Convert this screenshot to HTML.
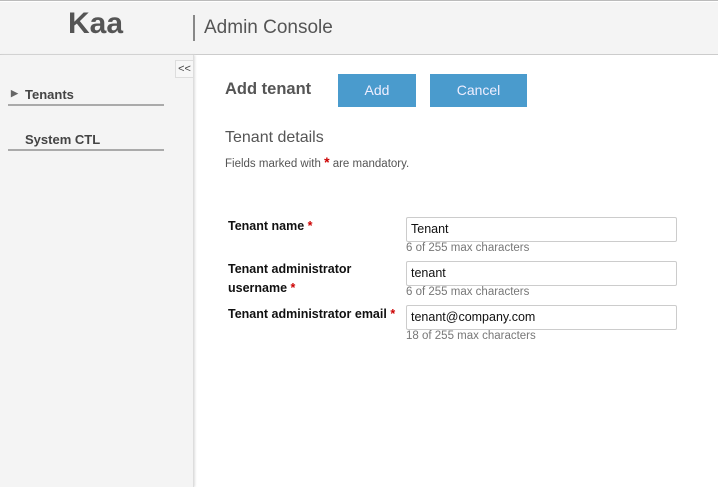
<!DOCTYPE html>
<html><head><meta charset="utf-8"><style>
*{margin:0;padding:0;box-sizing:border-box}
body{width:718px;height:486px;overflow:hidden;font-family:"Liberation Sans",sans-serif;background:#fff;position:relative;border-top:1px solid #bbb}
.hdr{position:absolute;left:0;top:1px;width:718px;height:53px;background:#f4f4f4;border-bottom:1px solid #ccc}
.logo{position:absolute;left:68px;top:5px;font-size:30px;font-weight:bold;color:#555}
.sep{position:absolute;left:193px;top:13px;width:2px;height:26px;background:#888}
.ac{position:absolute;left:204px;top:15px;font-size:19px;color:#555}
.side{position:absolute;left:0;top:54px;width:194px;height:432px;background:#f4f4f4;border-right:1px solid #ddd;box-shadow:1px 0 2px #ddd}
.tog{position:absolute;left:175px;top:59px;width:19px;height:18px;border:1px solid #ddd;background:#f7f7f7;font-size:11px;color:#444;text-align:center;line-height:16px}
.nav{position:absolute;left:8px;width:156px;border-bottom:2px solid #aaa;font-size:13px;font-weight:bold;color:#444;padding-bottom:2px;padding-left:17px}
h1{position:absolute;left:225px;top:79px;font-size:16.5px;color:#555}
.btn{position:absolute;top:73px;height:33px;background:#4a9bcd;color:#eef;font-size:14px;text-align:center;line-height:33px}
h2{position:absolute;left:225px;top:128px;font-size:16px;font-weight:normal;color:#555}
.note{position:absolute;left:225px;top:153px;font-size:11.5px;color:#555}
.r{color:#c00;font-weight:bold}
.lbl{position:absolute;left:228px;font-size:12.5px;font-weight:bold;color:#111;line-height:19px}
.in{position:absolute;left:406px;width:271px;height:25px;border:1px solid #ccc;border-radius:2px;font-size:12.5px;color:#111;padding:4px 4px}
.hint{position:absolute;left:406px;font-size:11.5px;color:#777}
</style></head><body>
<div class="hdr"><div class="logo">Kaa</div><div class="sep"></div><div class="ac">Admin Console</div></div>
<div class="side"></div>
<div class="tog">&lt;&lt;</div>
<div class="nav" style="top:86px;position:absolute"><span style="position:absolute;left:3px;top:1px;font-size:9px;color:#666">▶</span>Tenants</div>
<div class="nav" style="top:131px">System CTL</div>
<h1>Add tenant</h1>
<div class="btn" style="left:338px;width:78px">Add</div>
<div class="btn" style="left:430px;width:97px">Cancel</div>
<h2>Tenant details</h2>
<div class="note">Fields marked with <span class="r" style="font-size:14px">*</span> are mandatory.</div>
<div class="lbl" style="top:216px">Tenant name <span class="r">*</span></div>
<div class="in" style="top:216px">Tenant</div>
<div class="hint" style="top:241px">6 of 255 max characters</div>
<div class="lbl" style="top:259px">Tenant administrator<br>username <span class="r">*</span></div>
<div class="in" style="top:260px">tenant</div>
<div class="hint" style="top:285px">6 of 255 max characters</div>
<div class="lbl" style="top:304px">Tenant administrator email <span class="r">*</span></div>
<div class="in" style="top:304px">tenant@company.com</div>
<div class="hint" style="top:329px">18 of 255 max characters</div>
</body></html>
